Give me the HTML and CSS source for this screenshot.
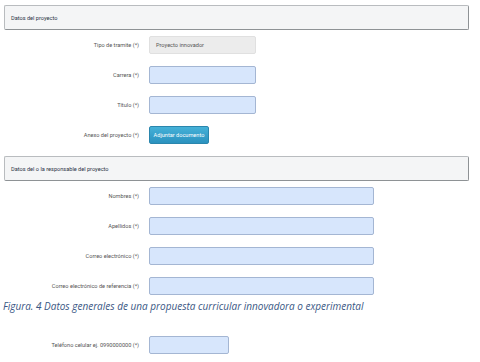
FILE: index.html
```html
<!DOCTYPE html>
<html lang="es">
<head>
<meta charset="UTF-8" />
<title>Datos generales de una propuesta curricular</title>
<link rel="stylesheet" href="styles.css">
</head>
<body>

<!-- Datos del proyecto -->
<div class="panel-heading">Datos del proyecto</div>

<div class="form-row first">
  <label class="form-label">Tipo de tramite (*)</label>
  <div class="field field-sm readonly">Proyecto innovador</div>
</div>
<div class="form-row">
  <label class="form-label">Carrera (*)</label>
  <div class="field field-sm"></div>
</div>
<div class="form-row">
  <label class="form-label">Título (*)</label>
  <div class="field field-sm"></div>
</div>
<div class="form-row">
  <label class="form-label">Anexo del proyecto (*)</label>
  <button class="btn-upload">Adjuntar documento</button>
</div>

<!-- Datos del responsable -->
<div class="panel-heading second">Datos del o la responsable del proyecto</div>

<div class="form-row first">
  <label class="form-label">Nombres (*)</label>
  <div class="field field-lg"></div>
</div>
<div class="form-row">
  <label class="form-label">Apellidos (*)</label>
  <div class="field field-lg"></div>
</div>
<div class="form-row">
  <label class="form-label">Correo electrónico (*)</label>
  <div class="field field-lg"></div>
</div>
<div class="form-row">
  <label class="form-label">Correo electrónico de referencia (*)</label>
  <div class="field field-lg"></div>
</div>

<p class="caption">Figura. 4 Datos generales de una propuesta curricular innovadora o experimental</p>

<div class="form-row phone">
  <label class="form-label">Teléfono celular ej. 0990000000 (*)</label>
  <div class="field field-xs"></div>
</div>

</body>
</html>
```

FILE: styles.css
```css
body {
  margin: 0;
  padding: 5px 11px 0 4px;
  background: #fff;
  font-family: Roboto, "Liberation Sans", sans-serif;
  color: #555;
}
/* Encabezados de sección */
.panel-heading {
  height: 25px;
  box-sizing: border-box;
  padding: 0 6px;
  display: flex;
  align-items: center;
  background: #f4f5f6;
  border: 1px solid #b9bcbf;
  border-right-color: #8e9295;
  border-bottom-color: #8e9295;
  border-radius: 2px;
  font-size: 5.6px;
  color: #2b3446;
}
.panel-heading.second {
  margin-top: 12px;
}
/* Filas del formulario */
.form-row {
  display: flex;
  align-items: center;
  gap: 10px;
  height: 18px;
  margin-top: 12px;
}
.form-row.first {
  margin-top: 6px;
}
.form-label {
  width: 135px;
  text-align: right;
  font-size: 5.6px;
  color: #555;
}
.field {
  height: 18px;
  box-sizing: border-box;
  background: #d7e6fc;
  border: 1px solid #a4b6d3;
  border-radius: 2px;
  padding: 0 6px;
  display: flex;
  align-items: center;
  font-size: 5.6px;
  color: #555;
}
.field.readonly {
  background: #ececec;
  border-color: #e0e0e0;
}
.field-sm { width: 107px; }
.field-lg { width: 225px; }
.field-xs { width: 80px; }
.btn-upload {
  height: 18px;
  width: 60px;
  padding: 0;
  border: 1px solid #2a86ad;
  border-radius: 2px;
  background: linear-gradient(#45b1d8, #2b92bf);
  color: #fff;
  font-family: inherit;
  font-size: 5.6px;
}
/* Leyenda de la figura */
.caption {
  margin: 4px 0 0 -1px;
  font-family: "Open Sans", sans-serif;
  font-style: italic;
  font-size: 10px;
  line-height: 15px;
  color: #3a5784;
}
.form-row.phone {
  margin-top: 22px;
}
```
